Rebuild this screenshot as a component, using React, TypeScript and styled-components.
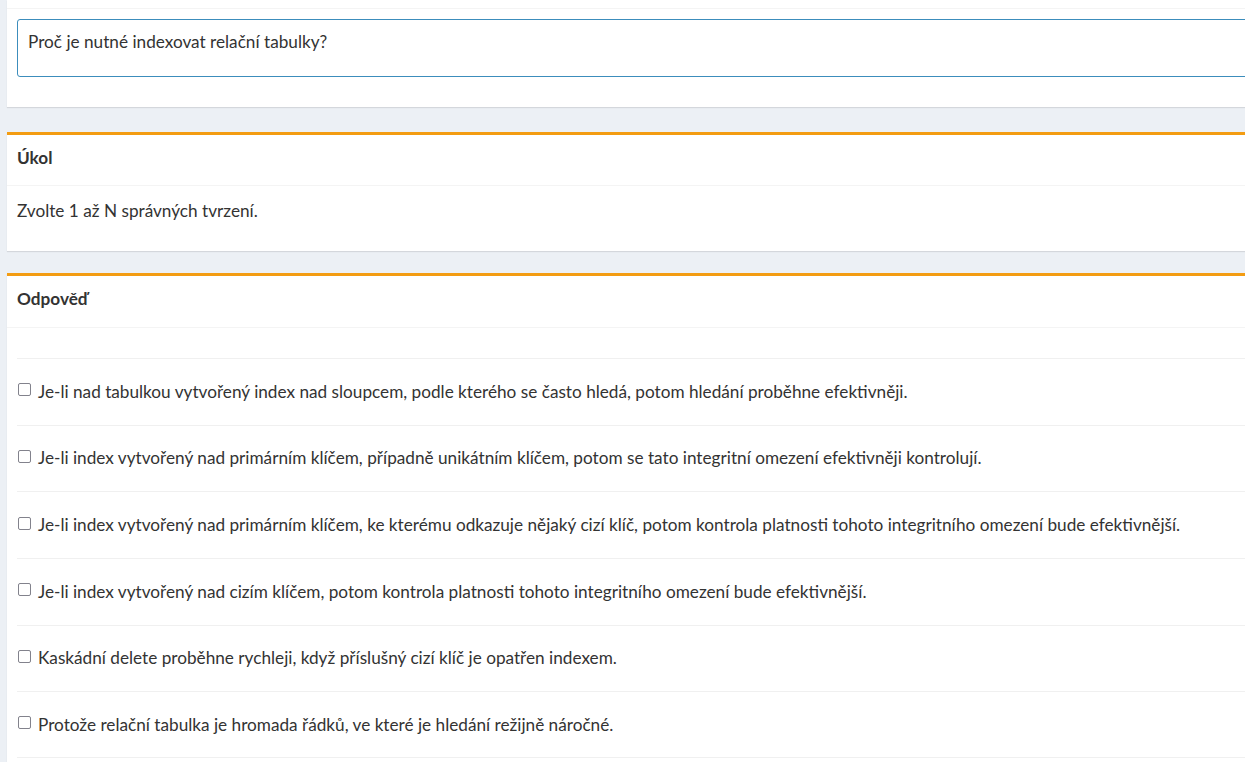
import React from "react";
import styled, { createGlobalStyle } from "styled-components";

const GlobalStyle = createGlobalStyle`
  html, body {
    margin: 0;
    padding: 0;
    background: #ecf0f5;
    overflow: hidden;
  }
  body {
    font-family: "Lato", "Liberation Sans", sans-serif;
    color: #333;
  }
`;

const Page = styled.div`
  width: 1245px;
  height: 762px;
  overflow: hidden;
  padding-left: 7px;
  box-sizing: border-box;
  background: #ecf0f5;
`;

const Card = styled.div<{ $accent?: boolean; $gap: number }>`
  width: 1300px;
  background: #fff;
  border-top: ${(p) => (p.$accent ? "3px solid #f39c12" : "none")};
  box-shadow: 0 1px 1px rgba(0, 0, 0, 0.1);
  margin-bottom: ${(p) => p.$gap}px;
`;

const TopStrip = styled.div`
  height: 8px;
  border-bottom: 1px solid #f4f4f4;
`;

const CardHeader = styled.div<{ $h: number }>`
  height: ${(p) => p.$h}px;
  box-sizing: border-box;
  padding: 12px 10px 0;
  border-bottom: 1px solid #f4f4f4;
  font-weight: 700;
  font-size: 17.2px;
  line-height: 22px;
  color: #333;
`;

const CardBody = styled.div<{ $pad: string }>`
  padding: ${(p) => p.$pad};
  font-size: 17.2px;
`;

const Question = styled.div`
  border: 1px solid #3c8dbc;
  border-radius: 3px;
  padding: 11px 10px 0;
  box-sizing: border-box;
  height: 58px;
  font-size: 17.2px;
  line-height: 22px;
  color: #333;
`;

const TaskText = styled.p`
  margin: 0;
  line-height: 22px;
`;

const AnswerList = styled.ul`
  list-style: none;
  margin: 0;
  padding: 0;
`;

const AnswerItem = styled.li`
  height: 66.67px;
  box-sizing: border-box;
  border-top: 1px solid #f0f0f0;
  display: flex;
  align-items: center;
  font-size: 17.2px;
  &:last-child {
    border-bottom: 1px solid #f0f0f0;
  }
`;

const Label = styled.label`
  display: flex;
  align-items: center;
  gap: 7px;
  cursor: pointer;
  line-height: 22px;
`;

const Check = styled.input`
  appearance: none;
  -webkit-appearance: none;
  width: 13px;
  height: 13px;
  margin: 0 0 0 1px;
  border: 1.6px solid #82828c;
  border-radius: 2px;
  box-sizing: border-box;
  background: #fff;
  position: relative;
  top: -2px;
  flex-shrink: 0;
`;

const answers = [
  "Je-li nad tabulkou vytvořený index nad sloupcem, podle kterého se často hledá, potom hledání proběhne efektivněji.",
  "Je-li index vytvořený nad primárním klíčem, případně unikátním klíčem, potom se tato integritní omezení efektivněji kontrolují.",
  "Je-li index vytvořený nad primárním klíčem, ke kterému odkazuje nějaký cizí klíč, potom kontrola platnosti tohoto integritního omezení bude efektivnější.",
  "Je-li index vytvořený nad cizím klíčem, potom kontrola platnosti tohoto integritního omezení bude efektivnější.",
  "Kaskádní delete proběhne rychleji, když příslušný cizí klíč je opatřen indexem.",
  "Protože relační tabulka je hromada řádků, ve které je hledání režijně náročné.",
];

export default function App() {
  return (
    <>
      <GlobalStyle />
      <Page>
        <Card $gap={25}>
          <TopStrip />
          <CardBody $pad="10px 10px 30px">
            <Question>Proč je nutné indexovat relační tabulky?</Question>
          </CardBody>
        </Card>
        <Card $accent $gap={22}>
          <CardHeader $h={51}>Úkol</CardHeader>
          <CardBody $pad="14px 10px 29px">
            <TaskText>Zvolte 1 až N správných tvrzení.</TaskText>
          </CardBody>
        </Card>
        <Card $accent $gap={20}>
          <CardHeader $h={52}>Odpověď</CardHeader>
          <CardBody $pad="30px 10px 10px">
            <AnswerList>
              {answers.map((a) => (
                <AnswerItem key={a}>
                  <Label>
                    <Check type="checkbox" />
                    <span>{a}</span>
                  </Label>
                </AnswerItem>
              ))}
            </AnswerList>
          </CardBody>
        </Card>
      </Page>
    </>
  );
}
